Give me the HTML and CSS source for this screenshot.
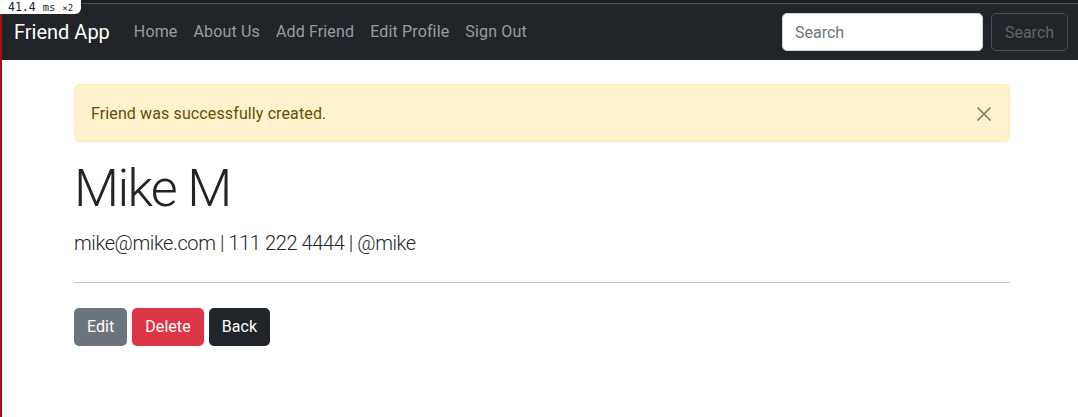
FILE: index.html
```html
<!DOCTYPE html>
<html lang="en">
<head>
<meta charset="utf-8">
<title>Friend App</title>
<link rel="stylesheet" href="styles.css">
</head>
<body>
<div class="debug-badge">41.4 <span class="ms">ms</span> <span class="times">×2</span></div>
<nav class="navbar">
  <a class="brand" href="#">Friend App</a>
  <ul class="nav-links">
    <li><a href="#">Home</a></li>
    <li><a href="#">About Us</a></li>
    <li><a href="#">Add Friend</a></li>
    <li><a href="#">Edit Profile</a></li>
    <li><a href="#">Sign Out</a></li>
  </ul>
  <form class="search-form">
    <input class="search-input" type="search" placeholder="Search">
    <button class="search-btn" type="button">Search</button>
  </form>
</nav>
<main class="container">
  <div class="alert">
    <span>Friend was successfully created.</span>
    <button class="btn-close" type="button" aria-label="Close">
      <svg width="16" height="16" viewBox="0 0 16 16"><path d="M1.5 1.5 L14.5 14.5 M14.5 1.5 L1.5 14.5" stroke="currentColor" stroke-width="1.6" fill="none"/></svg>
    </button>
  </div>
  <h1 class="name">Mike M</h1>
  <p class="lead">mike@mike.com | 111 222 4444 | @mike</p>
  <hr class="divider">
  <div class="actions">
    <a class="btn btn-secondary" href="#">Edit</a>
    <a class="btn btn-danger" href="#">Delete</a>
    <a class="btn btn-dark" href="#">Back</a>
  </div>
</main>
</body>
</html>
```
FILE: styles.css
```css
* { box-sizing: border-box; }
html, body { margin: 0; padding: 0; }
body {
  font-family: Roboto, "Noto Sans", "Liberation Sans", sans-serif;
  font-size: 16px;
  line-height: 1.5;
  color: #212529;
  background: #fff;
  border-left: 2px solid #a31212;
  min-height: 417px;
}
a { text-decoration: none; }

.debug-badge {
  position: absolute;
  top: 0;
  left: 0;
  height: 14px;
  padding: 0 8px 0 8px;
  background: #fff;
  border-radius: 0 0 6px 0;
  font-family: "DejaVu Sans Mono", "Liberation Mono", monospace;
  font-size: 11.5px;
  line-height: 14px;
  color: #222;
  z-index: 5;
}
.debug-badge .ms { font-size: 10.5px; }
.debug-badge .times { font-size: 9px; }

.navbar {
  display: flex;
  align-items: center;
  height: 60px;
  padding: 0 10px 0 12px;
  background: #212529;
  box-shadow: inset 0 3px 0 #1c1f22, inset 0 4px 0 #4d5156;
}
.brand {
  color: #fff;
  font-size: 20px;
  line-height: 30px;
  margin-right: 16px;
  padding-top: 4px;
}
.nav-links {
  display: flex;
  list-style: none;
  margin: 0;
  padding: 0;
  flex: 1;
}
.nav-links a {
  display: block;
  padding: 12px 8px 8px;
  letter-spacing: 0.15px;
  color: rgba(255, 255, 255, 0.55);
}
.search-form {
  display: flex;
  align-items: center;
  gap: 8px;
  padding-top: 3px;
}
.search-input {
  width: 201px;
  height: 38px;
  padding: 7px 12px 5px;
  font: inherit;
  color: #212529;
  background: #fff;
  border: 1px solid #ced4da;
  border-radius: 5px;
}
.search-input::placeholder { color: #6c757d; opacity: 1; }
.search-btn {
  width: 77px;
  height: 38px;
  font: inherit;
  color: #5f656b;
  background: transparent;
  border: 1px solid #4a4f55;
  border-radius: 5px;
  padding: 7px 10px 5px;
}

.container {
  width: 936px;
  margin-left: 72px;
  padding-top: 24px;
}
.alert {
  display: flex;
  align-items: center;
  justify-content: space-between;
  height: 58px;
  padding: 2px 15px 0 16px;
  background: #fff3cd;
  border: 1px solid #ffecb5;
  border-radius: 5px;
  color: #664d03;
  letter-spacing: 0.12px;
  margin-bottom: 16px;
}
.btn-close {
  display: flex;
  align-items: center;
  justify-content: center;
  width: 20px;
  height: 20px;
  padding: 0;
  border: 0;
  background: transparent;
  color: #7f7663;
}
.name {
  margin: 0 0 8px;
  font-size: 52px;
  font-weight: 300;
  line-height: 1.2;
  letter-spacing: -1.6px;
}
.lead {
  margin: 0;
  font-size: 20px;
  font-weight: 300;
  line-height: 30px;
  letter-spacing: -0.4px;
}
.divider {
  margin: 24px 0 25px;
  border: 0;
  border-top: 1px solid #c4c4c4;
  height: 0;
}
.actions {
  display: flex;
  gap: 5px;
}
.btn {
  display: inline-block;
  height: 38px;
  padding: 7px 13px 5px;
  line-height: 24px;
  font-size: 16px;
  letter-spacing: 0.05px;
  color: #fff;
  border-radius: 5px;
}
.btn-secondary { background: #6c757d; }
.btn-danger { background: #dc3545; }
.btn-dark { background: #212529; }
```
